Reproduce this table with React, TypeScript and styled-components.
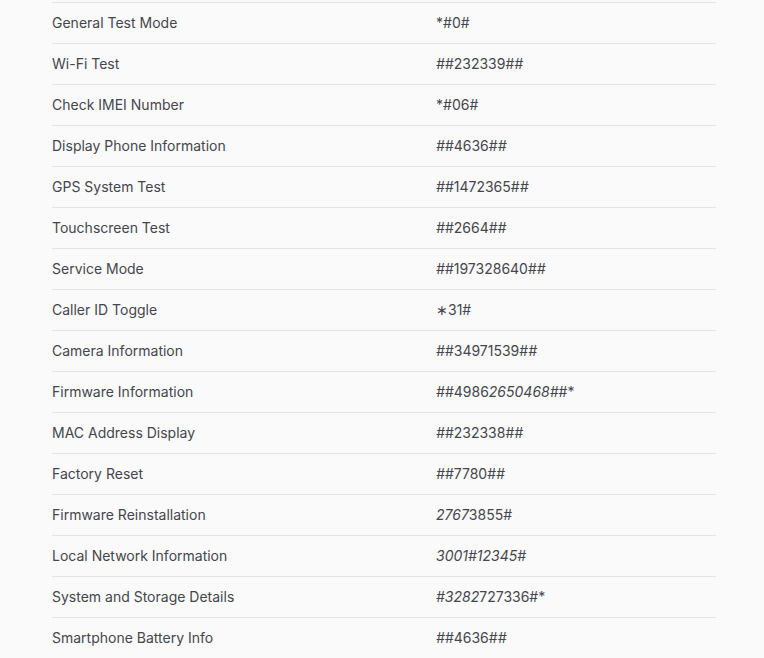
import React from 'react';
import styled, { createGlobalStyle } from 'styled-components';

const GlobalStyle = createGlobalStyle`
  html, body {
    margin: 0;
    padding: 0;
    background: #fafafa;
  }
  body {
    font-family: Inter, 'Noto Sans', sans-serif;
    -webkit-font-smoothing: antialiased;
  }
`;

const Page = styled.div`
  padding: 2px 48px 0 52px;
  overflow: hidden;
  height: 658px;
  box-sizing: border-box;
`;

const Table = styled.table`
  width: 664px;
  border-collapse: collapse;
  border-top: 1px solid #e4e4e4;
`;

const Row = styled.tr`
  border-bottom: 1px solid #e4e4e4;
`;

const Cell = styled.td<{ $wide?: boolean }>`
  height: 39px;
  padding: 0 0 1px;
  box-sizing: content-box;
  width: ${p => (p.$wide ? '384px' : 'auto')};
  font-size: 14px;
  color: #45464d;
  vertical-align: middle;
`;

type Part = [string, boolean?];

const rows: { name: string; code: Part[] }[] = [
  { name: 'General Test Mode', code: [['*#0#']] },
  { name: 'Wi-Fi Test', code: [['#', true], ['#232339#'], ['#', true]] },
  { name: 'Check IMEI Number', code: [['*#06#']] },
  { name: 'Display Phone Information', code: [['#', true], ['#4636#'], ['#', true]] },
  { name: 'GPS System Test', code: [['#', true], ['#1472365#'], ['#', true]] },
  { name: 'Touchscreen Test', code: [['#', true], ['#2664#'], ['#', true]] },
  { name: 'Service Mode', code: [['#', true], ['#197328640#'], ['#', true]] },
  { name: 'Caller ID Toggle', code: [['∗31#']] },
  { name: 'Camera Information', code: [['#', true], ['#34971539#'], ['#', true]] },
  { name: 'Firmware Information', code: [['#', true], ['#4986'], ['2650468#', true], ['#*']] },
  { name: 'MAC Address Display', code: [['#', true], ['#232338#'], ['#', true]] },
  { name: 'Factory Reset', code: [['#', true], ['#7780#'], ['#', true]] },
  { name: 'Firmware Reinstallation', code: [['2767', true], ['3855#']] },
  { name: 'Local Network Information', code: [['3001#12345#', true]] },
  { name: 'System and Storage Details', code: [['#3282', true], ['727336#*']] },
  { name: 'Smartphone Battery Info', code: [['#', true], ['#4636#'], ['#', true]] },
];

export default function App() {
  return (
    <>
      <GlobalStyle />
      <Page>
        <Table>
          <tbody>
            {rows.map(({ name, code }) => (
              <Row key={name}>
                <Cell $wide>{name}</Cell>
                <Cell>
                  {code.map(([text, italic], i) => (italic ? <em key={i}>{text}</em> : <span key={i}>{text}</span>))}
                </Cell>
              </Row>
            ))}
          </tbody>
        </Table>
      </Page>
    </>
  );
}
